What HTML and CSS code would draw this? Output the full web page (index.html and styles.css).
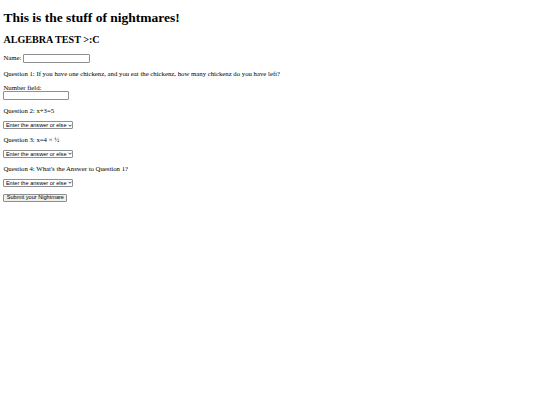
FILE: index.html
```html
<!DOCTYPE html>
<html>
<head>
<meta charset="utf-8">
<title>Algebra Test</title>
<link rel="stylesheet" href="styles.css">
</head>
<body class="page">
<h1 class="title">This is the stuff of nightmares!</h1>
<h2 class="subtitle">ALGEBRA TEST &gt;:C</h2>
<form class="quiz">
<p class="row">Name: <input class="field field-name" type="text"></p>
<p class="row">Question 1: If you have one chickenz, and you eat the chickenz, how many chickenz do you have left?</p>
<p class="row">Number field:<br><input class="field" type="number"></p>
<p class="row">Question 2: x+3=5</p>
<p class="row"><span class="select-wrap"><select class="choice"><option>Enter the answer or else</option></select><svg class="chev" viewBox="0 0 6 4" width="4" height="3"><path d="M0.7 0.8 L3 3.2 L5.3 0.8" fill="none" stroke="#222" stroke-width="1.2"/></svg></span></p>
<p class="row">Question 3: x=4 × ½</p>
<p class="row"><span class="select-wrap"><select class="choice"><option>Enter the answer or else</option></select><svg class="chev" viewBox="0 0 6 4" width="4" height="3"><path d="M0.7 0.8 L3 3.2 L5.3 0.8" fill="none" stroke="#222" stroke-width="1.2"/></svg></span></p>
<p class="row">Question 4: What's the Answer to Question 1?</p>
<p class="row"><span class="select-wrap"><select class="choice"><option>Enter the answer or else</option></select><svg class="chev" viewBox="0 0 6 4" width="4" height="3"><path d="M0.7 0.8 L3 3.2 L5.3 0.8" fill="none" stroke="#222" stroke-width="1.2"/></svg></span></p>
<p class="row"><button class="submit" type="button">Submit your Nightmare</button></p>
</form>
</body>
</html>
```
FILE: styles.css
```css
html {
  background: #fff;
}
.page {
  margin: 3.4px;
  font-family: "Liberation Serif", "Times New Roman", serif;
  font-size: 6.75px;
  color: #000;
}
.title {
  font-size: 13.5px;
  font-weight: bold;
  margin: 6.5px 0 8.5px;
}
.subtitle {
  font-size: 10.1px;
  font-weight: bold;
  margin: 8.4px 0;
}
.row {
  margin: 6.75px 0;
}
.field {
  box-sizing: border-box;
  width: 66px;
  height: 9.5px;
  padding: 0 1px;
  margin: 0;
  border: 0.8px solid #8f8f8f;
  border-radius: 1px;
  background: #fff;
  font-family: "Liberation Sans", Arial, sans-serif;
  font-size: 5.6px;
  vertical-align: middle;
}
.field-name {
  width: 67px;
}
.select-wrap {
  position: relative;
  display: inline-block;
  vertical-align: middle;
  line-height: 0;
}
.choice {
  -webkit-appearance: none;
  appearance: none;
  box-sizing: border-box;
  width: 70px;
  height: 7.6px;
  padding: 0 5px 0 1.5px;
  margin: 0;
  border: 0.8px solid #8f8f8f;
  border-radius: 1px;
  background: #fff;
  color: #000;
  font-family: "Liberation Sans", Arial, sans-serif;
  font-size: 5.6px;
  line-height: 6px;
}
.chev {
  position: absolute;
  right: 1.5px;
  top: 2.3px;
  pointer-events: none;
}
.submit {
  box-sizing: border-box;
  width: 64px;
  height: 7.8px;
  padding: 0;
  margin: 0;
  border: 0.8px solid #8f8f8f;
  border-radius: 1px;
  background: #efefef;
  color: #000;
  font-family: "Liberation Sans", Arial, sans-serif;
  font-size: 5.6px;
  line-height: 1;
}
```
